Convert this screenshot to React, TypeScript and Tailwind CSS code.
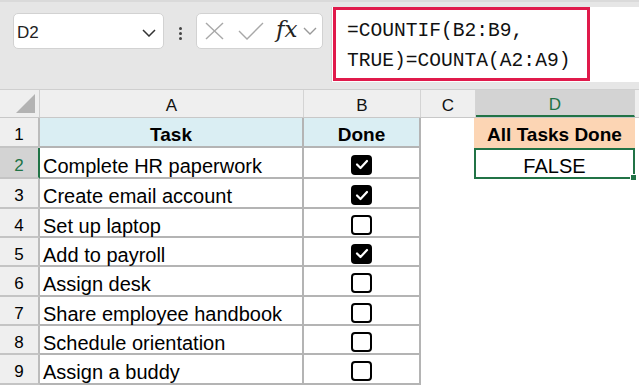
import React from 'react';

// Task checklist rows
const tasks: Array<{ name: string; done: boolean }> = [
    { name: 'Complete HR paperwork', done: true },
    { name: 'Create email account', done: true },
    { name: 'Set up laptop', done: false },
    { name: 'Add to payroll', done: true },
    { name: 'Assign desk', done: false },
    { name: 'Share employee handbook', done: false },
    { name: 'Schedule orientation', done: false },
    { name: 'Assign a buddy', done: false },
];

const rowHeights = ['h-[31px]', 'h-[30px]', 'h-[29px]', 'h-[29px]', 'h-[30px]', 'h-[29px]', 'h-[29px]', 'h-[30px]'];

const Checkbox = ({ checked }: { checked: boolean }) =>
    checked ? (
        <div className="w-[21px] h-[20px] rounded-[4px] bg-black flex items-center justify-center">
            <svg width="14" height="11" viewBox="0 0 14 11">
                <polyline points="2,5.5 5.5,9 12,2" fill="none" stroke="white" strokeWidth="2.2" strokeLinecap="round" strokeLinejoin="round" />
            </svg>
        </div>
    ) : (
        <div className="w-[21px] h-[20px] rounded-[4px] border-2 border-black bg-white"></div>
    );

const Toolbar = () => (
    <div className="h-[90px] bg-[#e6e6e6] border-t-2 border-[#dadada] border-b border-b-[#cfcfcf] flex items-start">
        {/* Name box */}
        <div className="mt-[11px] ml-[13px] w-[151px] h-[36px] bg-white rounded-[5px] border border-[#d2d2d2] flex items-center pl-[3px] pr-[7px] pt-[3px]">
            <span className="text-[17px] text-[#222] flex-1">D2</span>
            <svg width="14" height="8" viewBox="0 0 14 8">
                <polyline points="1,1 7,7 13,1" fill="none" stroke="#333" strokeWidth="1.5" />
            </svg>
        </div>

        {/* Divider dots */}
        <div className="w-[32px] mt-[25px] flex flex-col items-center gap-[2px]">
            <div className="w-[3px] h-[3px] rounded-full bg-[#444]"></div>
            <div className="w-[3px] h-[3px] rounded-full bg-[#444]"></div>
            <div className="w-[3px] h-[3px] rounded-full bg-[#444]"></div>
        </div>

        {/* Cancel / enter / fx */}
        <div className="mt-[11px] w-[127px] h-[36px] bg-white rounded-[5px] border border-[#d2d2d2] flex items-center pl-[8px]">
            <svg width="19" height="18" viewBox="0 0 19 18">
                <line x1="1" y1="1" x2="18" y2="17" stroke="#a8a8a8" strokeWidth="1.4" />
                <line x1="18" y1="1" x2="1" y2="17" stroke="#a8a8a8" strokeWidth="1.4" />
            </svg>
            <svg width="26" height="18" viewBox="0 0 26 18" className="ml-[14px]">
                <polyline points="1,9 9,17 25,1" fill="none" stroke="#a8a8a8" strokeWidth="1.4" />
            </svg>
            <span className="ml-[12px] font-['DejaVu_Serif'] italic text-[23px] leading-none text-[#222] -mt-[3px]">fx</span>
            <svg width="14" height="8" viewBox="0 0 14 8" className="ml-[6px]">
                <polyline points="1,1 7,7 13,1" fill="none" stroke="#999" strokeWidth="1.4" />
            </svg>
        </div>

        {/* Formula bar */}
        <div className="ml-[8px] mt-[5px] flex-1 h-[75px] bg-white border-l border-[#d6d6d6]">
            <div className="ml-[1px] w-[257px] h-[74px] border-[3px] border-[#e01a4b] pl-[11px] pt-[6px] font-['Liberation_Mono'] text-[19.6px] leading-[30px] text-[#111]">
                <div>=COUNTIF(B2:B9,</div>
                <div>TRUE)=COUNTA(A2:A9)</div>
            </div>
        </div>
    </div>
);

const HeaderRow = () => (
    <div className="flex h-[28px] bg-[#efefef] border-b border-[#c8c8c8] text-[17px] text-[#111]">
        <div className="w-[40px] border-r border-[#cfcfcf] flex items-end justify-end pr-[4px] pb-[4px]">
            <svg width="19" height="19" viewBox="0 0 19 19">
                <polygon points="19,0 19,19 0,19" fill="#b3b3b3" />
            </svg>
        </div>
        <div className="w-[264px] border-r border-[#d4d4d4] flex items-center justify-center pt-[5px]">A</div>
        <div className="w-[117px] border-r border-[#d4d4d4] flex items-center justify-center pt-[5px]">B</div>
        <div className="w-[55px] border-r border-[#d4d4d4] flex items-center justify-center pt-[5px]">C</div>
        <div className="w-[159px] bg-[#d3d3d3] border-b-2 border-[#217346] border-r border-r-[#d4d4d4] flex items-center justify-center pt-[5px] text-[#217346]">D</div>
        <div className="flex-1"></div>
    </div>
);

export default function App() {
    return (
        <div className="w-[639px] h-[387px] overflow-hidden bg-white font-['Liberation_Sans'] text-black">
            <Toolbar />
            <HeaderRow />

            {/* Row 1: table headers */}
            <div className="flex h-[30px]">
                <div className="w-[40px] bg-[#efefef] border-r-2 border-[#bcbcbc] border-b-2 border-b-[#c4c4c4] flex items-center justify-center pt-[6px] text-[17px]">1</div>
                <div className="w-[264px] bg-[#daeef3] border-r-2 border-[#b4b4b4] border-b-2 border-b-[#b4b4b4] flex items-center justify-center pt-[6px] font-bold text-[19px]">Task</div>
                <div className="w-[117px] bg-[#daeef3] border-r-2 border-[#b4b4b4] border-b-2 border-b-[#b4b4b4] flex items-center justify-center pt-[6px] font-bold text-[19px]">Done</div>
                <div className="w-[53px]"></div>
                <div className="w-[161px] bg-[#fcd5b4] flex items-center justify-center pt-[4px] font-bold text-[19px]">All Tasks Done</div>
            </div>

            {tasks.map((t, i) => {
                const selected = i === 0;
                return (
                    <div key={i} className={`flex ${rowHeights[i]}`}>
                        <div
                            className={
                                selected
                                    ? 'w-[40px] bg-[#d3d3d3] border-r-2 border-[#217346] border-b-2 border-b-[#c4c4c4] flex items-center justify-center pt-[6px] text-[17px] text-[#217346]'
                                    : 'w-[40px] bg-[#efefef] border-r-2 border-[#bcbcbc] border-b-2 border-b-[#c4c4c4] flex items-center justify-center pt-[6px] text-[17px]'
                            }
                        >
                            {i + 2}
                        </div>
                        <div className="w-[264px] border-r-2 border-[#b4b4b4] border-b-2 border-b-[#b4b4b4] flex items-center pl-[3px] pt-[6px] text-[20px] whitespace-nowrap">
                            {t.name}
                        </div>
                        <div className="w-[117px] border-r-2 border-[#b4b4b4] border-b-2 border-b-[#b4b4b4] flex items-center justify-center pt-[4px]">
                            <Checkbox checked={t.done} />
                        </div>
                        {selected && (
                            <>
                                <div className="w-[53px]"></div>
                                <div className="relative w-[161px] border-2 border-[#217346] flex items-center justify-center pt-[4px] text-[20px]">
                                    FALSE
                                    <div className="absolute -right-[4px] -bottom-[4px] w-[7px] h-[7px] bg-[#217346] border border-white"></div>
                                </div>
                            </>
                        )}
                    </div>
                );
            })}
        </div>
    );
}
